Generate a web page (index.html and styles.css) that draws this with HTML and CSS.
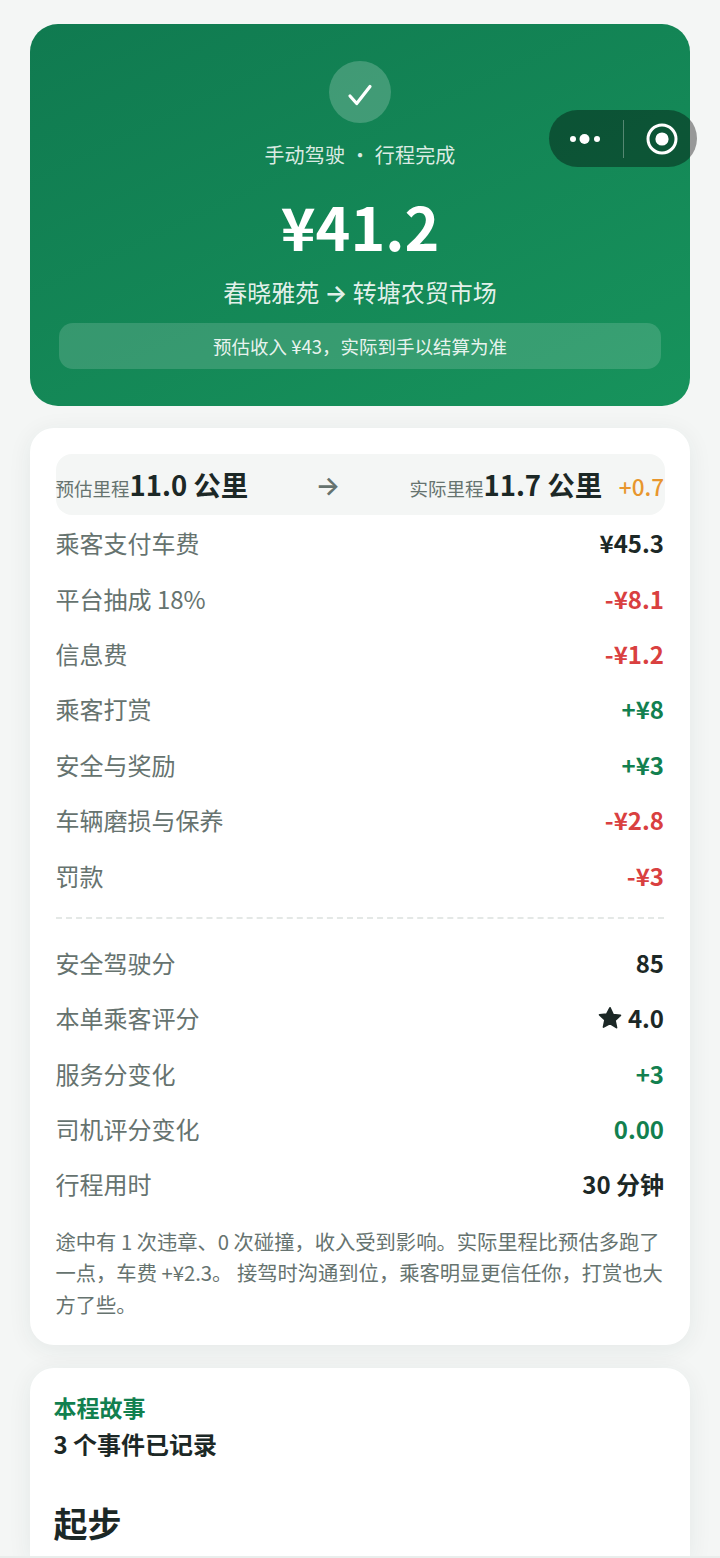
FILE: index.html
```html
<!DOCTYPE html>
<html lang="zh">
<head>
<meta charset="utf-8">
<title>行程完成</title>
<link rel="stylesheet" href="styles.css">
</head>
<body>
<main class="page">
  <section class="hero">
    <div class="check">
      <svg viewBox="0 0 30 30" width="30" height="30" fill="none" stroke="#fff" stroke-width="3.200" stroke-linecap="round" stroke-linejoin="round"><path d="M5 19l6.700 7.500L25 9.500"/></svg>
    </div>
    <div class="hero-sub">手动驾驶 · 行程完成</div>
    <div class="hero-amount">¥41.2</div>
    <div class="hero-route">春晓雅苑 <span class="arrow">→</span> 转塘农贸市场</div>
    <div class="hero-note">预估收入 ¥43，实际到手以结算为准</div>
  </section>

  <section class="card detail">
    <div class="mileage">
      <div class="mile"><span class="mile-label">预估里程</span><span class="mile-value">11.0 公里</span></div>
      <span class="mile-arrow arrow">→</span>
      <div class="mile"><span class="mile-label">实际里程</span><span class="mile-value">11.7 公里</span><span class="mile-diff">+0.7</span></div>
    </div>
    <div class="rows">
      <div class="row"><span class="k">乘客支付车费</span><span class="v">¥45.3</span></div>
      <div class="row"><span class="k">平台抽成 18%</span><span class="v red">-¥8.1</span></div>
      <div class="row"><span class="k">信息费</span><span class="v red">-¥1.2</span></div>
      <div class="row"><span class="k">乘客打赏</span><span class="v green">+¥8</span></div>
      <div class="row"><span class="k">安全与奖励</span><span class="v green">+¥3</span></div>
      <div class="row"><span class="k">车辆磨损与保养</span><span class="v red">-¥2.8</span></div>
      <div class="row"><span class="k">罚款</span><span class="v red">-¥3</span></div>
    </div>
    <div class="divider"></div>
    <div class="rows">
      <div class="row"><span class="k">安全驾驶分</span><span class="v">85</span></div>
      <div class="row"><span class="k">本单乘客评分</span><span class="v star-v"><svg class="star" viewBox="0 0 24 24" width="26" height="26"><path fill="#1c2826" stroke="#1c2826" stroke-width="1.600" stroke-linejoin="round" d="M12 2.600l2.900 6.200 6.700.8-5 4.600 1.400 6.700L12 17l-6 3.400 1.400-6.700-5-4.600 6.700-.8z"/></svg>4.0</span></div>
      <div class="row"><span class="k">服务分变化</span><span class="v green">+3</span></div>
      <div class="row"><span class="k">司机评分变化</span><span class="v green">0.00</span></div>
      <div class="row"><span class="k">行程用时</span><span class="v">30 分钟</span></div>
    </div>
    <p class="summary">途中有 1 次违章、0 次碰撞，收入受到影响。实际里程比预估多跑了一点，车费 +¥2.3。 接驾时沟通到位，乘客明显更信任你，打赏也大方了些。</p>
  </section>

  <section class="card story">
    <div class="story-tag">本程故事</div>
    <div class="story-count">3 个事件已记录</div>
    <h2 class="story-title">起步</h2>
  </section>
</main>

<div class="capsule">
  <svg class="dots" viewBox="0 0 34 12" width="34" height="12" fill="#fff"><circle cx="4" cy="6" r="3"/><circle cx="15.500" cy="6" r="5"/><circle cx="28" cy="6" r="3"/></svg>
  <span class="capsule-line"></span>
  <svg class="target" viewBox="0 0 32 32" width="32" height="32"><circle cx="16" cy="16" r="14" fill="none" stroke="#fff" stroke-width="3"/><circle cx="16" cy="16" r="6.600" fill="#fff"/></svg>
</div>
<div class="bottom-edge"></div>
</body>
</html>
```

FILE: styles.css
```css
* { box-sizing: border-box; }
html, body { margin: 0; padding: 0; height: 1558px; overflow: hidden; }
body {
  background: #f4f6f5;
  font-family: "Noto Sans CJK SC", "Noto Sans", sans-serif;
  color: #1c2826;
}
.page { height: 1558px; padding: 24px 30px 0; display: flex; flex-direction: column; gap: 22.500px; }
.hero {
  height: 381.500px;
  flex: none;
  border-radius: 28px;
  background: linear-gradient(155deg, #107a50, #17935c);
  padding: 37px 29px 0;
  display: flex;
  flex-direction: column;
  align-items: center;
  color: #fff;
}
.check {
  width: 62px; height: 62px; border-radius: 50%;
  background: rgba(255,255,255,.2);
  display: flex; align-items: center; justify-content: center;
}
.hero-sub { margin-top: 12px; font-size: 20px; letter-spacing: .2px; line-height: 40px; color: rgba(255,255,255,.85); }
.hero-amount { margin-top: 9px; font-size: 59px; line-height: 84px; font-weight: 700; }
.hero-route { margin-top: 0; font-size: 24px; line-height: 48px; color: rgba(255,255,255,.9); }
.arrow { font-family: Inter, sans-serif; font-weight: 600; }
.hero-note {
  margin-top: 5px; align-self: stretch; height: 46px; border-radius: 14px; flex: none;
  background: rgba(255,255,255,.15);
  font-size: 18.500px; line-height: 46px; text-align: center; color: rgba(255,255,255,.9);
}
.card {
  background: #fff; border-radius: 24px;
  box-shadow: 0 4px 24px rgba(30,60,50,.07);
}
.detail { height: 917px; flex: none; padding: 26px 26px 0 25.500px; }
.mileage {
  height: 61px; background: #f4f6f5; border-radius: 16px;
  display: flex; justify-content: space-between; align-items: center;
  margin-right: -1px;
}
.mile { display: flex; align-items: baseline; white-space: nowrap; margin-top: -2px; padding-right: 1px; }
.mile-label { font-size: 18.500px; color: #66736f; }
.mile-value { font-size: 27.500px; font-weight: 700; color: #1c2826; }
.mile-arrow { font-size: 26px; line-height: 1; color: #66736f; margin: 3px 0 0 -3px; }
.mile-diff { margin-left: 16.500px; font-size: 22.500px; font-weight: 500; color: #e8962e; }
.rows { display: flex; flex-direction: column; }
.row { height: 55.400px; display: flex; justify-content: space-between; align-items: center; }
.k { font-size: 24px; color: #66736f; }
.v { font-size: 24px; font-weight: 700; color: #1c2826; }
.red { color: #d94040; }
.green { color: #12804f; }
.star-v { display: flex; align-items: center; gap: 5px; }
.divider { margin: 14px 0 16px; border-top: 2px dashed #e4e8e6; }
.summary { margin: 14px 0 0; font-size: 20.300px; line-height: 31.500px; color: #66736f; }
.story { flex: 1; padding: 23px 24px 0 23.500px; border-radius: 24px 24px 0 0; }
.story-tag { font-size: 23px; line-height: 32px; font-weight: 700; color: #12804f; }
.story-count { margin-top: 1px; font-size: 24px; line-height: 40px; font-weight: 700; }
.story-title { margin: 35px 0 0; font-size: 34px; line-height: 48px; font-weight: 700; }
.capsule {
  position: absolute; left: 549px; top: 110px; width: 148px; height: 57px;
  border-radius: 29px; background: rgba(0,0,0,.38);
  display: flex; align-items: center; padding-left: 20px;
}
.capsule-line { width: 1px; height: 38px; margin-left: 20px; background: rgba(255,255,255,.3); }
.target { margin-left: 22px; }
.bottom-edge { position: absolute; left: 0; right: 0; top: 1556px; height: 2px; background: #e9eeec; }
```
